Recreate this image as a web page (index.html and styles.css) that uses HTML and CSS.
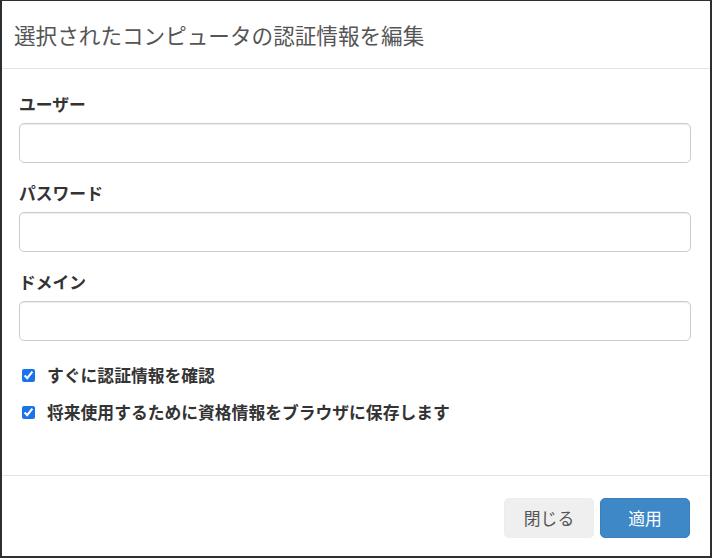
FILE: index.html
```html
<!DOCTYPE html>
<html lang="ja">
<head>
<meta charset="utf-8">
<title>認証情報を編集</title>
<link rel="stylesheet" href="styles.css">
</head>
<body>
<div class="modal">
  <div class="modal-header">
    <h4 class="modal-title">選択されたコンピュータの認証情報を編集</h4>
  </div>
  <div class="modal-body">
    <div class="form-group">
      <label class="field-label">ユーザー</label>
      <input class="form-control" type="text">
    </div>
    <div class="form-group">
      <label class="field-label">パスワード</label>
      <input class="form-control" type="password">
    </div>
    <div class="form-group">
      <label class="field-label">ドメイン</label>
      <input class="form-control" type="text">
    </div>
    <label class="check-row first">
      <input type="checkbox" checked>
      <span>すぐに認証情報を確認</span>
    </label>
    <label class="check-row">
      <input type="checkbox" checked>
      <span>将来使用するために資格情報をブラウザに保存します</span>
    </label>
  </div>
  <div class="modal-footer">
    <button class="btn btn-default">閉じる</button>
    <button class="btn btn-primary">適用</button>
  </div>
</div>
</body>
</html>
```

FILE: styles.css
```css
* {
  box-sizing: border-box;
}

html, body {
  margin: 0;
  padding: 0;
  background: #ffffff;
}

body {
  font-family: "Noto Sans CJK JP", "Noto Sans", sans-serif;
  color: #333333;
}

.modal {
  width: 712px;
  height: 558px;
  border-style: solid;
  border-color: #2e2e2e;
  border-width: 1px 2px 2px 2px;
  display: flex;
  flex-direction: column;
  background: #ffffff;
}

.modal-header {
  padding: 18px 12px;
  border-bottom: 1px solid #e5e5e5;
}

.modal-title {
  margin: 0;
  font-size: 21.6px;
  line-height: 31px;
  font-weight: 400;
  color: #555555;
}

.modal-body {
  flex: 1;
  padding: 23px 19px 0 17px;
}

.form-group {
  display: flex;
  flex-direction: column;
  margin-bottom: 18px;
}

.field-label {
  font-size: 16.8px;
  line-height: 24px;
  font-weight: 700;
  color: #333333;
  margin-bottom: 7px;
}

.form-control {
  height: 40px;
  width: 100%;
  border: 1px solid #cccccc;
  border-radius: 5px;
  padding: 0 14px;
  font-size: 16.8px;
  box-shadow: inset 0 1px 1px rgba(0, 0, 0, 0.075);
  outline: none;
}

.check-row {
  display: flex;
  align-items: center;
  height: 24px;
  margin-top: 13px;
  font-size: 16.8px;
  font-weight: 700;
  color: #333333;
}

.check-row.first {
  margin-top: 22px;
}

.check-row input {
  width: 13px;
  height: 13px;
  margin: 0 12px 0 3px;
  accent-color: #1a73e8;
}

.modal-footer {
  border-top: 1px solid #e5e5e5;
  padding: 22px 20px 18px 20px;
  display: flex;
  justify-content: flex-end;
  gap: 6px;
}

.btn {
  width: 90px;
  height: 40px;
  border-radius: 5px;
  font-family: "Noto Sans CJK JP", "Noto Sans", sans-serif;
  font-size: 16.8px;
  font-weight: 400;
  cursor: pointer;
}

.btn-default {
  background: #efefef;
  border: 1px solid #ececec;
  color: #555555;
}

.btn-primary {
  background: #3e88c8;
  border: 1px solid #3a80bd;
  color: #ffffff;
}
```
